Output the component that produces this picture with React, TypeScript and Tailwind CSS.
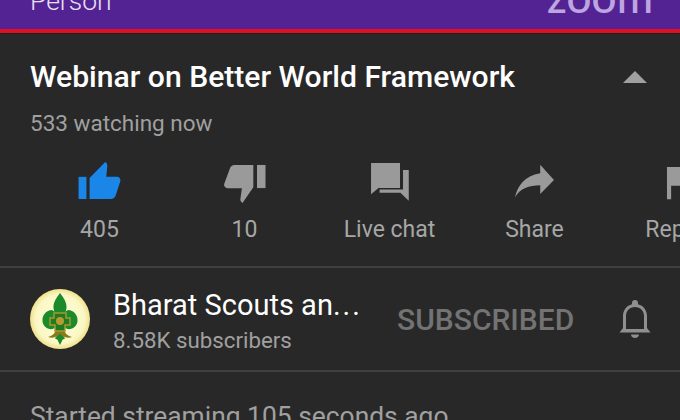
import React from 'react';

const ActionItem = ({ label, blue, children }: { label: string; blue?: boolean; children: React.ReactNode }) => (
  <div className="flex w-[145px] shrink-0 flex-col items-center">
    <svg className={`h-[50px] w-[50px] ${blue ? 'text-[#1a86e8]' : 'text-[#9a9a9a]'}`} viewBox="0 0 48 48" fill="currentColor">
      {children}
    </svg>
    <span className="mt-[10px] text-[23px] leading-[28px] text-[#a6a6a6]">{label}</span>
  </div>
);

const ScoutLogo = () => (
  <svg className="h-[60px] w-[60px] shrink-0" viewBox="0 0 60 60">
    <defs>
      <radialGradient id="badge" cx="50%" cy="50%" r="50%">
        <stop offset="0%" stopColor="#fffde0" />
        <stop offset="82%" stopColor="#fbf7c4" />
        <stop offset="100%" stopColor="#efe08a" />
      </radialGradient>
    </defs>
    <circle cx="30" cy="30" r="30" fill="url(#badge)" />
    <path d="M30 4c4 5 7 10 6.500 15-.3 3-1.500 5-1.500 7H25c0-2-1.200-4-1.500-7C23 14 26 9 30 4z" fill="#1a8a2a" />
    <path d="M21 21c-5 1-9 5-8.500 11 .3 4 3 7 7 8 3 .7 6-1 7.500-3.500V25c-2-2-4-4-6-4z" fill="#1a8a2a" />
    <path d="M39 21c5 1 9 5 8.500 11-.3 4-3 7-7 8-3 .7-6-1-7.500-3.500V25c2-2 4-4 6-4z" fill="#1a8a2a" />
    <path d="M30 44c2.500 2 4.500 4 5 5.500-1.500.5-3 1-3 2.500l-2 4-2-4c0-1.500-1.500-2-3-2.500.5-1.500 2.500-3.500 5-5.500z" fill="#1a8a2a" />
    <path d="M18 48c4-1 7-3 8-8h8c1 5 4 7 8 8-4 1.500-8 .5-12-3-4 3.500-8 4.500-12 3z" fill="#8a7a1e" />
    <path d="M24 24h12v5h4v7h-5v6H25v-6h-5v-7h4z" fill="#1f7a22" stroke="#a89a2c" strokeWidth="1.500" />
    <circle cx="30" cy="32" r="4" fill="#b89a30" />
  </svg>
);

const App = () => {
  return (
    <div className="flex h-[420px] w-[680px] flex-col overflow-hidden bg-[#282828] font-['Roboto',sans-serif]">
      {/* Video bottom edge */}
      <div className="flex h-[29px] shrink-0 items-end justify-between overflow-hidden bg-[#532393] pb-[14px] pl-[30px] pr-[27px]">
        <span className="text-[26.500px] font-light leading-[28px] text-[#e8e0f2]">Person</span>
        <span className="-mb-[3px] font-['Lato',sans-serif] text-[44px] font-medium leading-[44px] text-[#bda6e0]">zoom</span>
      </div>
      <div className="h-[4px] shrink-0 bg-[#de1021]" />
      <div className="h-[1px] shrink-0 bg-[#1f1f1f]" />

      {/* Title */}
      <div className="mt-[25px] flex items-center justify-between pl-[30px] pr-[33px]">
        <h1 className="text-[30.100px] font-medium leading-[36px] text-white">Webinar on Better World Framework</h1>
        <div className="h-0 w-0 border-x-[12px] border-b-[12px] border-x-transparent border-b-[#a0a0a0]" />
      </div>
      <p className="mt-[14px] pl-[30px] text-[22.500px] leading-[28px] text-[#a0a0a0]">533 watching now</p>

      {/* Actions */}
      <div className="mt-[19px] flex pl-[27px]">
        <ActionItem label="405" blue>
          <path d="M3.400 20H11v21.300H3.400z" />
          <path d="M14 41.300V21L29 5.800c1.500 1 2.300 2.500 2 4L30 20h10c2.500 0 4 2 3.500 4.200L39 38c-.6 2-2.200 3.300-4.500 3.300z" />
        </ActionItem>
        <ActionItem label="10">
          <path d="M35.500 8.600h8.200v22.200h-8.200z" />
          <path d="M32 8.600V30L21.600 45c-1.600-1-2.300-2.500-2-4L21 31H8c-2.500 0-4.500-2-4-4.200L9.500 12c.6-2 2.200-3.400 4.500-3.400z" />
        </ActionItem>
        <ActionItem label="Live chat">
          <path d="M5.800 6.700h27.800v24H13l-7.200 6z" />
          <path d="M36.500 13.400H42V43l-8-7.800H14v-3h22.500z" />
        </ActionItem>
        <ActionItem label="Share">
          <path d="M29 8.500L42.200 23 29 36.500V28C18 28 10 31 4.800 39.500 7 29 14 19 29 16.500z" />
        </ActionItem>
        <ActionItem label="Report">
          <path d="M11.500 10.500h26l1 4h8v18H32l-1-4H15.500v13h-4z" />
        </ActionItem>
      </div>

      <div className="mt-[22px] h-[2px] shrink-0 bg-[#3f3f3f]" />

      {/* Channel */}
      <div className="flex h-[102px] shrink-0 items-center pl-[30px]">
        <ScoutLogo />
        <div className="ml-[23px] w-[251px] pt-[4px]">
          <p className="whitespace-nowrap text-[29px] leading-[34px] text-white">
            Bharat Scouts an<span className="tracking-[2px]">...</span>
          </p>
          <p className="mt-[4px] text-[22.300px] leading-[28px] text-[#a0a0a0]">8.58K subscribers</p>
        </div>
        <span className="ml-[33px] mt-[2px] text-[30px] font-medium leading-[34px] text-[#737373]">SUBSCRIBED</span>
        <svg className="ml-[43px] h-[40px] w-[36px] text-[#8f8f8f]" viewBox="0 0 36 40" fill="currentColor">
          <path d="M18 1a3 3 0 0 1 3 3v1.200C26.500 6.500 30 11.500 30 17v12l3.500 4.500H2.500L6 29V17c0-5.500 3.500-10.500 9-11.800V4a3 3 0 0 1 3-3zm0 7c-5.500 0-9 4-9 9v13h18V17c0-5-3.500-9-9-9z" fillRule="evenodd" />
          <path d="M14 35.500h8c0 2.200-1.800 3.500-4 3.500s-4-1.300-4-3.500z" />
        </svg>
      </div>

      <div className="h-[2px] shrink-0 bg-[#3f3f3f]" />

      <p className="mt-[29px] whitespace-nowrap pl-[30px] text-[26.400px] leading-[30px] text-[#a0a0a0]">Started streaming 105 seconds ago</p>
    </div>
  );
};

export default App;
